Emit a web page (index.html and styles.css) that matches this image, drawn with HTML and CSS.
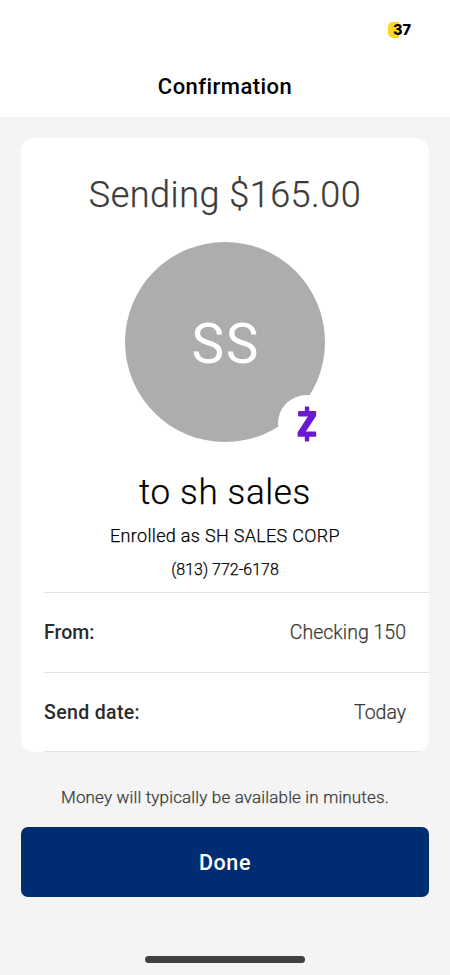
FILE: index.html
```html
<!DOCTYPE html>
<html lang="en">
<head>
<meta charset="utf-8">
<meta name="viewport" content="width=device-width, initial-scale=1">
<title>Confirmation</title>
<link rel="stylesheet" href="styles.css">
</head>
<body>
<header class="header">
  <div class="status"><span class="battery">37</span></div>
  <h1 class="title">Confirmation</h1>
</header>
<main class="content">
  <section class="card">
    <h2 class="amount">Sending $165.00</h2>
    <div class="avatar">
      <span class="initials">SS</span>
      <span class="badge">
        <svg width="20" height="36" viewBox="0 0 20 36" aria-hidden="true">
          <path d="M8.700 1.500h2.600V6h7v3.500L7.200 26.400H18.300v3.400h-7v4.800h-2.600V29.800H1.500v-3.400L12.600 9.500H2V6h6.700z" fill="#6a1bd1" stroke="#6a1bd1" stroke-width="1.800" stroke-linejoin="round"/>
        </svg>
      </span>
    </div>
    <p class="recipient">to sh sales</p>
    <p class="enrolled">Enrolled as SH SALES CORP</p>
    <p class="phone">(813) 772-6178</p>
    <dl class="details">
      <div class="row"><dt class="label from">From:</dt><dd class="value">Checking 150</dd></div>
      <div class="row"><dt class="label">Send date:</dt><dd class="value">Today</dd></div>
    </dl>
  </section>
  <p class="note">Money will typically be available in minutes.</p>
  <button class="done" type="button">Done</button>
  <div class="home-indicator"></div>
</main>
</body>
</html>
```

FILE: styles.css
```css
* { box-sizing: border-box; margin: 0; padding: 0; }
body {
  height: 975px;
  display: flex;
  flex-direction: column;
  overflow: hidden;
  background: #f4f4f4;
  color: #000;
  font-family: Roboto, "Liberation Sans", sans-serif;
  white-space: nowrap;
}
.header { height: 117px; background: #fff; }
.status { height: 60px; display: flex; justify-content: flex-end; padding: 22px 38px 0 0; }
.battery {
  width: 24px;
  height: 16px;
  padding-left: 5px;
  border-radius: 5px;
  background: linear-gradient(90deg, #f8d823 0 11px, #fff 11px);
  font: 800 14.500px/16px Inter, sans-serif;
}
.title { font-size: 22px; font-weight: 500; line-height: 54px; letter-spacing: 0.450px; text-align: center; }
.content { flex: 1; display: flex; flex-direction: column; padding: 21px 21px 0; }
.card {
  height: 614px;
  display: flex;
  flex-direction: column;
  align-items: center;
  border-radius: 13px;
  background: #fff;
  overflow: hidden;
}
.amount, .recipient, .enrolled, .phone, .value, .note {
  font-weight: 300;
  -webkit-text-stroke: 0.250px currentColor;
}
.amount { margin-top: 32px; font-size: 36px; line-height: 50px; letter-spacing: 0.500px; color: #3a3a3a; }
.avatar {
  position: relative;
  flex: none;
  width: 200px;
  height: 200px;
  margin-top: 22px;
  display: grid;
  place-items: center;
  border-radius: 50%;
  background: #adadad;
}
.initials { padding-top: 3px; font-size: 55px; line-height: 60px; letter-spacing: 1.500px; margin-right: -1.500px; color: #fff; }
.badge {
  position: absolute;
  left: 153px;
  top: 153px;
  width: 57px;
  height: 57px;
  display: grid;
  place-items: center;
  border-radius: 50%;
  background: #fff;
}
.recipient { margin-top: 27px; font-size: 35px; line-height: 48px; letter-spacing: 0.650px; }
.enrolled { margin-top: 6px; font-size: 18px; line-height: 26px; letter-spacing: 0.320px; }
.phone { margin-top: 8px; font-size: 16px; line-height: 25px; }
.details { width: 385px; margin: 10px 0 0 23px; border-top: 1px solid #e2e2e2; }
.row {
  height: 80px;
  display: flex;
  align-items: center;
  justify-content: space-between;
  padding-right: 23px;
  border-bottom: 1px solid #e2e2e2;
  font-size: 19.500px;
}
.row:last-child { height: 79px; padding-top: 1px; }
.label { font-weight: 500; letter-spacing: 0.350px; color: #2b2b2b; }
.from { letter-spacing: 0; }
.value { color: #3a3a3a; }
.note { margin-top: 33px; text-align: center; font-size: 17px; line-height: 24px; letter-spacing: 0.160px; color: #3a3a3a; }
.done {
  height: 70px;
  margin-top: 18px;
  padding-top: 1px;
  border: 0;
  border-radius: 7px;
  background: #002d72;
  color: #fff;
  font: 500 21.500px/70px Roboto, sans-serif;
  letter-spacing: 0.600px;
}
.home-indicator { width: 160px; height: 7px; margin: 59px auto 0; border-radius: 4px; background: #404040; }
```
